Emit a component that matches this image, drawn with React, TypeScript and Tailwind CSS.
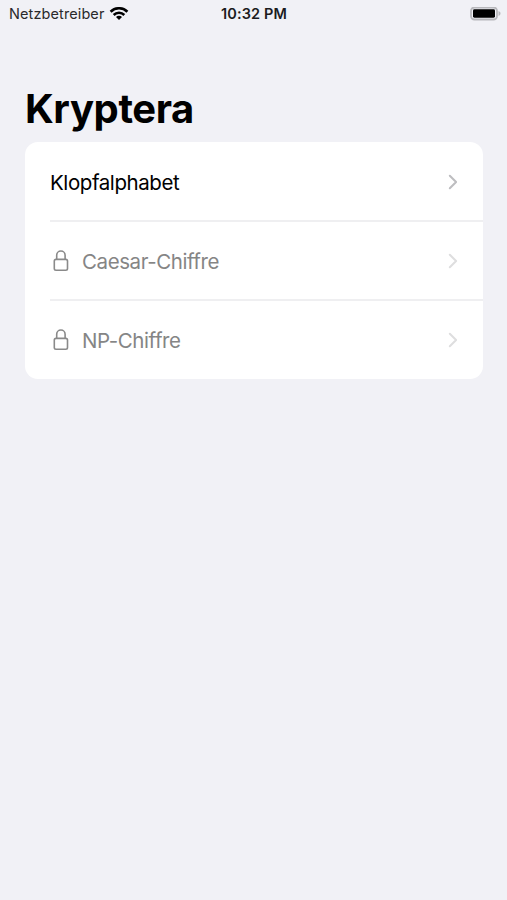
import clsx from 'clsx';

type Cipher = {
  name: string;
  locked: boolean;
};

const ciphers: Cipher[] = [
  { name: 'Klopfalphabet', locked: false },
  { name: 'Caesar-Chiffre', locked: true },
  { name: 'NP-Chiffre', locked: true },
];

const WifiIcon = () => (
  <svg width="20" height="14" viewBox="0 0 20 14" fill="none" stroke="#000" strokeWidth="2.6">
    <path d="M1.6 4.7a12 12 0 0 1 16.8 0" />
    <path d="M4.7 8a7.5 7.5 0 0 1 10.6 0" />
    <path d="M10 13 7 10.1a4.2 4.2 0 0 1 6 0Z" fill="#000" stroke="none" />
  </svg>
);

const BatteryIcon = () => (
  <svg width="31" height="14" viewBox="0 0 31 14">
    <rect x="1" y="0.5" width="26" height="12" rx="3.4" fill="none" stroke="#b8b8bc" strokeWidth="1.8" />
    <rect x="3" y="2.3" width="22" height="8.4" rx="1.4" fill="#000" />
    <path d="M28.5 4.1c1.2.4 2 1.3 2 2.4s-.8 2-2 2.400Z" fill="#b8b8bc" />
  </svg>
);

const LockIcon = () => (
  <svg width="16" height="22" viewBox="0 0 16 22" fill="none" stroke="#8a8a8a" strokeWidth="1.6">
    <rect x="1.3" y="9.4" width="13.2" height="10.8" rx="1.7" />
    <path d="M3.7 9.4V5.2a4.2 4.2 0 0 1 8.4 0v4.2" />
  </svg>
);

const ChevronIcon = ({ locked }: { locked: boolean }) => (
  <svg
    width="10"
    height="16"
    viewBox="0 0 10 16"
    fill="none"
    className={clsx(locked ? 'stroke-[#dededf]' : 'stroke-[#bdbdc0]')}
    strokeWidth="2"
    strokeLinecap="round"
    strokeLinejoin="round"
  >
    <path d="M1.8 1.7 8.1 8l-6.3 6.3" />
  </svg>
);

const StatusBar = () => (
  <header className="grid h-7 grid-cols-3 items-center pl-[9px] pr-[6px]">
    <div className="flex items-center gap-[5px]">
      <span className="text-[14.5px] tracking-[0.1px] text-[#29292b]">Netzbetreiber</span>
      <WifiIcon />
    </div>
    <span className="whitespace-nowrap pr-[2px] text-center text-[14.5px] font-semibold tracking-[0.1px] text-[#1c1c1e]">
      10:32 PM
    </span>
    <div className="flex justify-end">
      <BatteryIcon />
    </div>
  </header>
);

const CipherRow = ({ cipher }: { cipher: Cipher }) => (
  <li className="group pl-[25px]">
    <button
      className={clsx(
        '-mb-px flex h-20 w-full items-center border-b-2 border-[#efeff1] pr-[25px] pt-px text-left text-[20.5px] tracking-[-0.42px]',
        'group-last:mb-0 group-last:h-[79px] group-last:border-b-0 group-last:pt-0',
        cipher.locked ? 'text-[#858585]' : 'text-black'
      )}
    >
      {cipher.locked && (
        <span className="mr-[13px] pl-[3px]">
          <LockIcon />
        </span>
      )}
      <span className="flex-1 pt-[3px]">{cipher.name}</span>
      <ChevronIcon locked={cipher.locked} />
    </button>
  </li>
);

const App = () => {
  return (
    <div className="min-h-screen bg-[#f1f1f6] font-['Inter','Liberation_Sans',sans-serif]">
      <StatusBar />
      <main className="pl-[25px] pr-6 pt-[56px]">
        <h1 className="text-[40px] font-bold leading-[50px] tracking-[-0.4px] text-black">Kryptera</h1>
        <ul className="mt-2 overflow-hidden rounded-[13px] bg-white">
          {ciphers.map(cipher => (
            <CipherRow key={cipher.name} cipher={cipher} />
          ))}
        </ul>
      </main>
    </div>
  );
};

export default App;
